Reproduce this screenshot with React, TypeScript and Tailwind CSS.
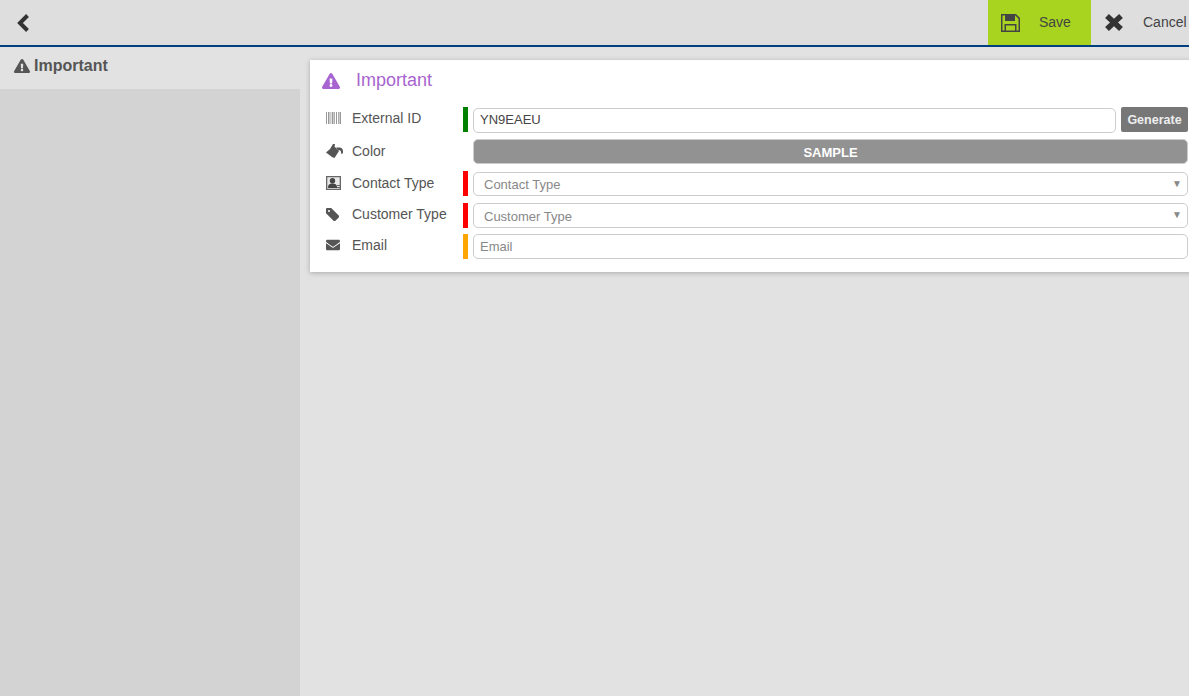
import React from "react";
import { FaExclamationTriangle, FaEnvelope } from "react-icons/fa";

const font = { fontFamily: '"Liberation Sans", Arial, sans-serif' };

function ContactIcon() {
  return (
    <svg viewBox="0 0 15 14" width="15" height="14">
      <path d="M0 0h15v14H0z" className="fill-[#e8e8e8]" />
      <path fillRule="evenodd" d="M0 0h15v14H0zM1.300 1.300v11.400h12.400V1.300z" className="fill-[#666]" />
      <circle cx="6.500" cy="4.800" r="2.700" className="fill-[#444]" />
      <path d="M2 12c0-3.500 1.500-4.500 4.500-4.500s4 1 4.500 3V12z" className="fill-[#444]" />
      <path d="M11 9h3v1h-3zM11 11h3v1h-3z" className="fill-[#666]" />
    </svg>
  );
}

function BarcodeIcon() {
  return (
    <svg viewBox="0 0 15 12" width="15" height="12" className="fill-[#999]">
      <path d="M0 0h1v12H0zM2 0h1.500v12H2zM4.500 0h.8v12h-.8zM6 0h1.500v12H6zM8.200 0h.8v12h-.8zM10 0h1v12h-1zM12 0h.8v12H12zM13.500 0H15v12h-1.500z" />
    </svg>
  );
}

function BucketIcon() {
  return (
    <svg viewBox="0 0 17 14" width="17" height="14" className="fill-[#555]">
      <path d="M7 0h2l-.5 2.500L13 7 8.500 14 6 13 0 8.500 4 5z" />
      <path d="M10 3.500h3.500c2 0 3.500 1.500 3.500 4 0 1.500-.3 2.500-1 2.500s-1-1-1-2c0-1.200-.8-1.800-2-1.800h-1z" />
    </svg>
  );
}

function TagIcon() {
  return (
    <svg viewBox="0 0 13 13" width="13" height="13" className="fill-[#555]">
      <path fillRule="evenodd" d="M0 1.200C0 .5.500 0 1.200 0h4L13 7.800c.4.400.4 1 0 1.400l-3.800 3.800c-.4.400-1 .4-1.400 0L0 5.200zM3 2a1 1 0 1 0 0 2 1 1 0 0 0 0-2z" />
    </svg>
  );
}

function SaveIcon() {
  return (
    <svg viewBox="0 0 19 18" width="19" height="18" className="fill-[#444]">
      <path fillRule="evenodd" d="M0 0h15l4 4v14H0zM1.500 1.500v15h2V10h12v6.500h2V4.800L14.300 1.500H14V7H4V1.500zM5 11.500v5h9v-5z" />
      <path d="M5 1.500h4.500V6H5z" />
    </svg>
  );
}

function Row({ icon, label, mark, children, mt, labelOffset }: { icon: React.ReactNode; label: string; mark?: string; children: React.ReactNode; mt: string; labelOffset: string }) {
  return (
    <div className={`flex h-[25px] items-start ${mt}`}>
      <div className={`flex h-[20px] w-[138px] shrink-0 items-center ${labelOffset}`}>
        <span className="flex w-[27px] shrink-0 items-center pl-[1px]">{icon}</span>
        <span className="text-[14px] whitespace-nowrap text-[#555]">{label}</span>
      </div>
      <div className={`h-[25px] w-[5px] shrink-0 ${mark ?? ""}`} />
      <div className="ml-[5px] flex min-w-0 flex-1 gap-[5px]">{children}</div>
    </div>
  );
}

function Select({ text, box }: { text: string; box: string }) {
  return (
    <div className={`relative flex w-[715px] items-center rounded-[5px] border border-[#ccc] bg-white pl-[10px] text-[13px] text-[#888] ${box}`}>
      {text}
      <span className="absolute right-[5px] top-[6px] text-[10px] leading-[10px] text-[#888]">▼</span>
    </div>
  );
}

export default function App() {
  return (
    <div className="flex h-[696px] w-[1189px] flex-col overflow-hidden bg-[#e2e2e2]" style={font}>
      <header className="flex h-[47px] shrink-0 items-stretch border-b-2 border-[#004080] bg-[#dedede]">
        <div className="flex w-[48px] items-center pl-[16px]">
          <svg viewBox="0 0 14 20" width="14" height="20" className="fill-none stroke-[#333] stroke-[4]">
            <path d="M11.500 2.500 4 10l7.500 7.500" />
          </svg>
        </div>
        <div className="flex-1" />
        <div className="flex w-[103px] items-center bg-[#a8d41f] pl-[13px] text-[14px] text-[#444]">
          <SaveIcon />
          <span className="ml-[19px]">Save</span>
        </div>
        <div className="flex w-[98px] items-center pl-[13px] text-[14px] text-[#444]">
          <svg viewBox="0 0 20 19" width="20" height="19" className="fill-none stroke-[#333] stroke-[5.5]">
            <path d="M3 3l14 13M17 3 3 16" />
          </svg>
          <span className="ml-[19px]">Cancel</span>
        </div>
      </header>
      <div className="flex min-h-0 flex-1">
        <aside className="flex w-[300px] shrink-0 flex-col bg-[#d3d3d3]">
          <div className="flex h-[42px] items-start gap-[4px] bg-[#e2e2e2] pl-[14px] pt-[10px] text-[16px] font-bold leading-[18px] text-[#555]">
            <FaExclamationTriangle size={16} className="mt-[1px]" />
            Important
          </div>
        </aside>
        <main className="min-w-0 flex-1 pl-[10px] pt-[13px]">
          <section className="h-[212px] w-[890px] bg-white pl-[15px] shadow-[0_1px_5px_rgba(0,0,0,0.25)]">
            <h2 className="mb-[6px] flex h-[41px] items-center text-[18px] font-normal text-[#a864d0]">
              <FaExclamationTriangle size={18} className="-ml-[3px] mr-[16px] text-[#a864d0]" />
              Important
            </h2>
            <Row mt="" labelOffset="mt-[1px]" mark="bg-[#008000]" icon={<BarcodeIcon />} label="External ID">
              <div className="mt-[1px] flex h-[25px] w-[643px] items-center rounded-[5px] border border-[#ccc] bg-white pb-[1px] pl-[6px] text-[13px] text-[#444]">YN9EAEU</div>
              <div className="flex h-[25px] w-[67px] items-center justify-center rounded-[2px] bg-[#777] pt-[1px] text-[12.500px] font-bold text-[#eee]">Generate</div>
            </Row>
            <Row mt="mt-[7px]" labelOffset="mt-[2px]" icon={<BucketIcon />} label="Color">
              <div className="flex h-[25px] w-[715px] items-center justify-center rounded-[5px] border border-[#ccc] bg-[#929292] pt-[2px] text-[13px] font-bold text-white">SAMPLE</div>
            </Row>
            <Row mt="mt-[7px]" labelOffset="mt-[2px]" mark="bg-[#ff0000]" icon={<ContactIcon />} label="Contact Type">
              <Select text="Contact Type" box="mt-[1px] h-[24px] pt-[1px]" />
            </Row>
            <Row mt="mt-[7px]" labelOffset="mt-[1px]" mark="bg-[#ff0000]" icon={<TagIcon />} label="Customer Type">
              <Select text="Customer Type" box="h-[25px] pt-[2px]" />
            </Row>
            <Row mt="mt-[6px]" labelOffset="mt-[1px]" mark="bg-[#ffa500]" icon={<FaEnvelope size={14} className="text-[#555]" />} label="Email">
              <div className="flex h-[25px] w-[715px] items-center rounded-[5px] border border-[#ccc] bg-white pl-[6px] text-[13px] text-[#888]">Email</div>
            </Row>
          </section>
        </main>
      </div>
    </div>
  );
}
